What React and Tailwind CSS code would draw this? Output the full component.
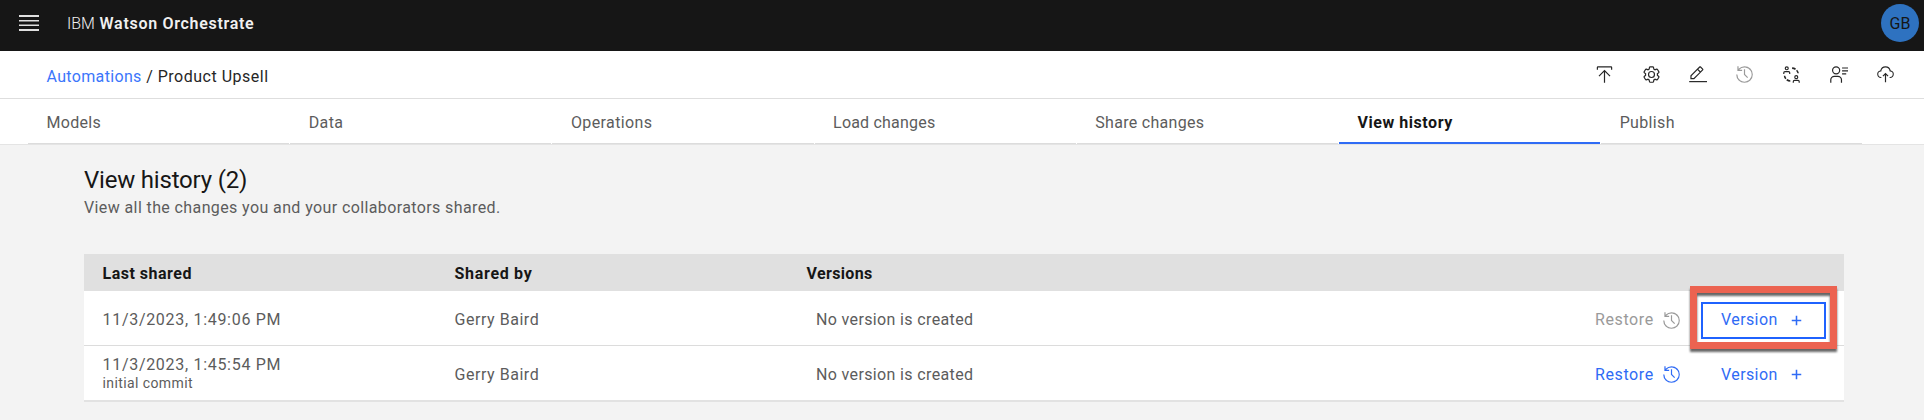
const ICONS = {
  upload: [
    "M6 18L7.41 19.41 15 11.83 15 30 17 30 17 11.83 24.59 19.41 26 18 16 8 6 18z",
    "M3 8L3 4a2 2 0 0 1 2-2H27a2 2 0 0 1 2 2V8H27V4H5V8z",
  ],
  settings: [
    "M27,16.76c0-.25,0-.5,0-.76s0-.51,0-.77l1.92-1.68A2,2,0,0,0,29.3,11L26.94,7a2,2,0,0,0-1.73-1,2,2,0,0,0-.64.1l-2.43.82a11.35,11.35,0,0,0-1.31-.75l-.51-2.52a2,2,0,0,0-2-1.61H13.64a2,2,0,0,0-2,1.61l-.51,2.52a11.48,11.48,0,0,0-1.32.75L7.43,6.06A2,2,0,0,0,6.79,6,2,2,0,0,0,5.06,7L2.7,11a2,2,0,0,0,.41,2.51L5,15.24c0,.25,0,.5,0,.76s0,.51,0,.77L3.11,18.45A2,2,0,0,0,2.7,21L5.06,25a2,2,0,0,0,1.73,1,2,2,0,0,0,.64-.1l2.43-.82a11.35,11.35,0,0,0,1.31.75l.51,2.52a2,2,0,0,0,2,1.61h4.72a2,2,0,0,0,2-1.61l.51-2.52a11.48,11.48,0,0,0,1.32-.75l2.42.82a2,2,0,0,0,.64.1,2,2,0,0,0,1.73-1L29.3,21a2,2,0,0,0-.41-2.51ZM25.21,24l-3.43-1.16a8.86,8.86,0,0,1-2.71,1.57L18.36,28H13.64l-.71-3.55a9.36,9.36,0,0,1-2.7-1.57L6.79,24,4.43,20l2.72-2.4a8.9,8.9,0,0,1,0-3.13L4.43,12,6.79,8l3.43,1.16a8.86,8.86,0,0,1,2.71-1.57L13.64,4h4.72l.71,3.55a9.36,9.36,0,0,1,2.7,1.57L25.21,8,27.57,12l-2.72,2.4a8.9,8.9,0,0,1,0,3.13L27.57,20Z",
    "M16,22a6,6,0,1,1,6-6A5.94,5.94,0,0,1,16,22Zm0-10a3.91,3.91,0,0,0-4,4,3.91,3.91,0,0,0,4,4,3.91,3.91,0,0,0,4-4A3.91,3.91,0,0,0,16,12Z",
  ],
  edit: [
    "M2 27H32V29H2z",
    "M25.4 9c.8-.8.8-2 0-2.8l-3.6-3.6c-.8-.8-2-.8-2.8 0l-15 15V24h6.4L25.4 9zM20.4 4L24 7.6l-3 3L17.4 7 20.4 4zM6 22v-3.6l10-10 3.6 3.6-10 10H6z",
  ],
  history: [
    "M20.59 22L15 16.41V7h2v8.58l5 5.01L20.59 22z",
    "M16,2A13.94,13.94,0,0,0,6,6.23V2H4v8h8V8H7.08A12,12,0,1,1,4,16H2A14,14,0,1,0,16,2Z",
  ],
  swap: [
    "M8 2a3.500 3.500 0 1 0 0 7a3.500 3.500 0 0 0 0-7zm0 2a1.500 1.500 0 1 1 0 3a1.500 1.500 0 0 1 0-3z",
    "M2 15v-2a3 3 0 0 1 3-3h6a3 3 0 0 1 3 3v2h-2v-2a1 1 0 0 0-1-1H5a1 1 0 0 0-1 1v2z",
    "M24 17a3.500 3.500 0 1 0 0 7a3.500 3.500 0 0 0 0-7zm0 2a1.500 1.500 0 1 1 0 3a1.500 1.500 0 0 1 0-3z",
    "M18 30v-2a3 3 0 0 1 3-3h6a3 3 0 0 1 3 3v2h-2v-2a1 1 0 0 0-1-1h-6a1 1 0 0 0-1 1v2z",
    "M17 4a11 11 0 0 1 6.500 2L22 8.300a9 9 0 0 0-5-1.700zM25.500 8a11 11 0 0 1 3 6h-2.500a9 9 0 0 0-2.300-4.200z",
    "M3 18h2.500a9 9 0 0 0 2 4.300L5.500 24a11 11 0 0 1-2.500-6zM9 23.700a9 9 0 0 0 5 2v2.500a11 11 0 0 1-7-2.700z",
  ],
  profile: [
    "M12,4A5,5,0,1,1,7,9a5,5,0,0,1,5-5m0-2a7,7,0,1,0,7,7A7,7,0,0,0,12,2Z",
    "M22,30H20V25a5,5,0,0,0-5-5H9a5,5,0,0,0-5,5v5H2V25a7,7,0,0,1,7-7h6a7,7,0,0,1,7,7Z",
    "M22 4H32V6H22zM22 9H32V11H22zM22 14H29V16H22z",
  ],
  cloud: [
    "M11 18L12.41 19.41 15 16.83 15 29 17 29 17 16.83 19.59 19.41 21 18 16 13 11 18z",
    "M23.5,22H23V20h.5a4.5,4.5,0,0,0,.36-9L23,11l-.1-.82a7,7,0,0,0-13.88,0L9,11,8.14,11a4.5,4.5,0,0,0,.36,9H9v2H8.5A6.5,6.5,0,0,1,7.2,9.14a9,9,0,0,1,17.6,0A6.5,6.5,0,0,1,23.5,22Z",
  ],
  add: ["M17.300 14.700V8h-2.600v6.700H8v2.600h6.700V24h2.600v-6.700H24v-2.600z"],
};

function Icon({ name, className = "" }) {
  return (
    <svg viewBox="0 0 32 32" fill="currentColor" className={"size-[19px] shrink-0 " + className}>
      {ICONS[name].map((d) => (
        <path key={d} d={d} />
      ))}
    </svg>
  );
}

const TOOLS = ["upload", "settings", "edit", "history", "swap", "profile", "cloud"];

const TABS = [
  ["Models", "tracking-[0.3px]"],
  ["Data", "tracking-[0.4px]"],
  ["Operations", "tracking-[0.4px]"],
  ["Load changes", "tracking-[0.2px]"],
  ["Share changes", "tracking-[0.3px]"],
  ["View history", "tracking-[0.55px]"],
  ["Publish", "tracking-[0.35px]"],
];

function Row({ date, note, restoreClass, focused }) {
  return (
    <div
      className={
        "flex items-center bg-white pl-[18.500px] text-[#5c5c5c] " +
        (focused ? "h-[55px] border-b border-[#dcdcdc] pt-1" : "h-14 border-b-2 border-[#e2e2e2] pt-[3px]")
      }
    >
      <div className="w-[352px]">
        <div className={"tracking-[0.7px] " + (note ? "leading-[19px]" : "leading-[18px]")}>{date}</div>
        {note && <div className="mb-0.5 text-sm leading-[18px] tracking-[0.4px]">{note}</div>}
      </div>
      <div className="w-[361.500px] tracking-[0.54px]">Gerry Baird</div>
      <div className="flex-1 tracking-[0.36px]">No version is created</div>
      <div className={"flex w-[106px] items-center " + restoreClass}>
        <span className="w-[67px] tracking-[0.6px]">Restore</span>
        <Icon name="history" />
      </div>
      <div
        className={
          "relative mr-[18px] flex h-[37px] w-[125px] items-center pl-5 text-[#2f6bf5] " +
          (focused ? "outline-2 -outline-offset-2 outline-[#1f62fe]" : "")
        }
      >
        <span className="w-[66px] tracking-[0.4px]">Version</span>
        <Icon name="add" />
        {focused && (
          <div className="pointer-events-none absolute -left-[11px] -top-4 h-[63px] w-[147px] border-[7px] border-[#ec6351] drop-shadow-[0_3px_1px_rgba(0,0,0,0.6)]" />
        )}
      </div>
    </div>
  );
}

export default function App() {
  return (
    <div className="h-[420px] w-[1924px] overflow-hidden bg-[#f3f3f3] font-[Roboto,sans-serif] text-base">
      <header className="flex h-[51px] items-center justify-between bg-[#161616] pb-[5px] pl-[19px] pr-[5px] text-[#f0f0f0]">
        <div className="flex items-center">
          <svg viewBox="0 0 20 16" className="h-4 w-5" fill="#e0e0e0">
            <path d="M0 0h20v2H0zM0 5h20v1.500H0zM0 9.500h20v1.500H0zM0 14h20v2H0z" />
          </svg>
          <div className="ml-7 pt-0.5 tracking-[0.7px]">
            <span className="font-light tracking-normal">IBM</span> <b className="font-semibold">Watson Orchestrate</b>
          </div>
        </div>
        <div className="flex size-[38px] items-center justify-center rounded-full bg-[#2e72c0] pt-0.5 text-[#161616]">GB</div>
      </header>
      <div className="flex h-12 items-center justify-between border-b border-[#dedede] bg-white pl-[46.500px] pr-[29px] text-[#262626]">
        <div className="pt-1 tracking-[0.5px]">
          <span className="tracking-[0.34px] text-[#3b76fb]">Automations</span> / Product Upsell
        </div>
        <div className="flex gap-[27.900px]">
          {TOOLS.map((t) => (
            <Icon key={t} name={t} className={t === "history" ? "text-[#9a9a9a]" : ""} />
          ))}
        </div>
      </div>
      <nav className="flex h-[46px] border-b border-[#e4e4e4] bg-white pl-[28px]">
        {TABS.map(([label, tracking]) => {
          const active = label === "View history";
          return (
            <div
              key={label}
              className={
                "mr-px flex h-[45px] w-[261.200px] items-center pl-[18.500px] pt-1 " +
                tracking +
                (active
                  ? " -mb-px h-[45.500px] border-b-2 border-[#2f6bf5] font-bold text-[#161616]"
                  : " border-b border-[#dcdcdc] text-[#5c5c5c]")
              }
            >
              {label}
            </div>
          );
        })}
      </nav>
      <main className="pl-[84px] pr-[80px] pt-[21px]">
        <h1 className="text-2xl leading-[28px] tracking-[-0.2px] text-[#161616]">View history (2)</h1>
        <p className="leading-[27px] tracking-[0.39px] text-[#5c5c5c]">View all the changes you and your collaborators shared.</p>
        <div className="mt-[33px] flex h-[37px] items-center bg-[#e0e0e0] pl-[18.500px] pt-0.5 font-bold text-[#161616]">
          <div className="w-[352px] tracking-[0.5px]">Last shared</div>
          <div className="w-[352px] tracking-[0.7px]">Shared by</div>
          <div className="tracking-[0.35px]">Versions</div>
        </div>
        <Row date="11/3/2023, 1:49:06 PM" restoreClass="text-[#9a9a9a]" focused />
        <Row date="11/3/2023, 1:45:54 PM" note="initial commit" restoreClass="text-[#2f6bf5]" />
      </main>
    </div>
  );
}
